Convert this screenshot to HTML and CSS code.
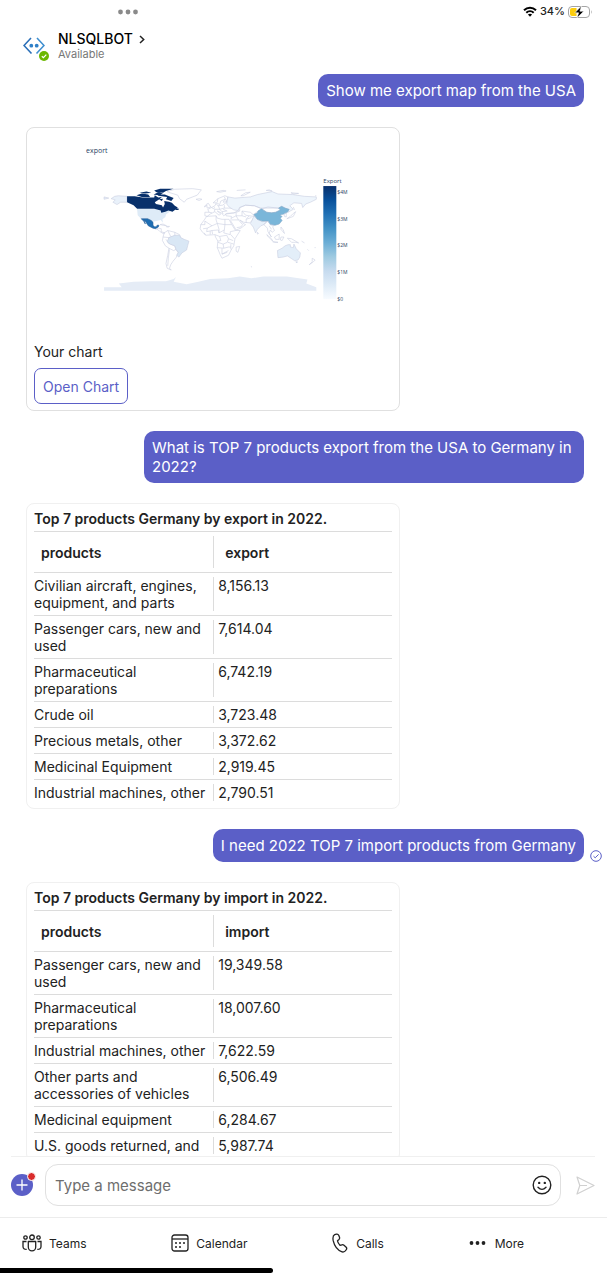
FILE: index.html
```
<!DOCTYPE html>
<html lang="en">
<head>
  <meta charset="UTF-8" />
  <meta name="viewport" content="width=device-width, initial-scale=1.0"/>
  <title>NLSQLBOT</title>
  <link rel="stylesheet" href="styles.css">
</head>
<body>
<div class="app">

  <div class="statusbar">
    <svg class="dots" width="20" height="6" viewBox="0 0 20 6" fill="#8a8a8a"><circle cx="2.5" cy="3" r="2.4"/><circle cx="10" cy="3" r="2.4"/><circle cx="17.5" cy="3" r="2.4"/></svg>
    <div class="power">
      <svg width="14" height="11" viewBox="0 0 14 11" fill="none" stroke="#000" stroke-width="2"><path d="M1 4.2C4.500.8 9.500.8 13 4.200"/><path d="M3.300 6.700C5.400 4.700 8.600 4.700 10.700 6.700"/><path d="M7 10.800L4.900 8.600Q7 7 9.100 8.600Z" fill="#000" stroke="none"/></svg>
      <span>34%</span>
      <svg width="25" height="12" viewBox="0 0 25 12"><rect x=".5" y=".5" width="21" height="11" rx="3.500" fill="#fff" stroke="#a5a5a5"/><path d="M4 2H8.500V10H4Q2 10 2 8V4Q2 2 4 2Z" fill="#fccd0e"/><path d="M23 4Q24.500 6 23 8Z" fill="#a5a5a5"/><path d="M13.500 0L6.800 6.800H10.600L9 12L15.800 5.200H11.900Z" fill="#000" stroke="#fff" stroke-width=".6"/></svg>
    </div>
  </div>

  <header class="header">
    <div class="avatar">
      <svg width="22" height="18" viewBox="0 0 22 18" fill="none" stroke-width="1.600"><path d="M8 1L1 8.500L8.500 16.500" stroke="#2a6fb8"/><path d="M14 1L21 8.500L13.500 16.500" stroke="#3f8fd0"/><circle cx="8.300" cy="8.700" r="1.900" fill="#2f80c8"/><circle cx="13.700" cy="8.700" r="1.900" fill="#2f80c8"/></svg>
      <svg class="presence" width="10" height="10" viewBox="0 0 10 10"><circle cx="5" cy="5" r="5" fill="#6bb700"/><path d="M2.800 5.200L4.400 6.700L7.300 3.600" fill="none" stroke="#fff" stroke-width="1.200"/></svg>
    </div>
    <div>
      <h1 class="name"><a href="#profile">NLSQLBOT <svg width="6" height="9" viewBox="0 0 6 9" fill="none" stroke="#222" stroke-width="1.500"><path d="M1 1L4.700 4.500L1 8"/></svg></a></h1>
      <div class="presence-text">Available</div>
    </div>
  </header>

  <main class="chat">
    <div class="sent">
      <p class="bubble">Show me export map from the USA</p>
      <span class="receipt"></span>
    </div>

    <section class="card chart-card">
      <svg class="chart" viewBox="34 135 358 200" role="img" aria-label="Export map">
        <defs>
          <linearGradient id="blues" x1="0" y1="0" x2="0" y2="1">
            <stop offset="0" stop-color="#08306b"/>
            <stop offset=".125" stop-color="#08519c"/>
            <stop offset=".25" stop-color="#2171b5"/>
            <stop offset=".375" stop-color="#4292c6"/>
            <stop offset=".5" stop-color="#6baed6"/>
            <stop offset=".625" stop-color="#9ecae1"/>
            <stop offset=".75" stop-color="#c6dbef"/>
            <stop offset=".875" stop-color="#deebf7"/>
            <stop offset="1" stop-color="#f7fbff"/>
          </linearGradient>
        </defs>
        <text class="chart-title" x="86" y="153">export</text>

        <!-- world map, points are longitude / latitude -->
        <g class="map" transform="translate(210 237.500) scale(.589 -.589)">
          <path class="ice" d="M-180-90V-84L-150-84L-155-78L-130-75L-100-74L-75-74L-62-70L-58-67L-62-75L-40-79L-20-75L0-70L30-69L50-66L70-69L90-66L130-66L165-71L163-78L180-84V-90Z"/>
          <!-- North America -->
          <path class="low" d="M-168 66L-162 70L-156 71L-141 70V60L-152 60L-158 56L-165 60L-161 64ZM-180 65L-172 67L-180 69Z"/>
          <path class="usa" d="M-124 49H-95L-83 45L-79 43L-70 47L-67 45L-75 39L-76 35L-81 31L-80 25L-84 30L-97 27L-106 32L-117 32L-123 38Z"/>
          <path class="canada" d="M-141 60V70L-128 70L-115 68L-108 68L-95 68L-94 72L-88 68L-82 69L-85 66L-94 60L-92 57L-82 55L-80 51L-77 57L-78 62L-70 61L-65 59L-60 54L-55 51L-60 47L-64 44L-68 45L-71 46L-76 44L-83 42L-84 46L-95 49H-124L-130 55Z"/>
          <path class="canada" d="M-125 72L-116 75L-105 73L-102 69L-116 69ZM-120 76L-108 78L-100 76L-110 75ZM-96 73L-88 77L-80 75L-88 72ZM-95 80L-85 83L-62 83L-75 79L-80 76L-91 77ZM-90 73L-77 73L-62 67L-66 62L-75 65L-73 69L-88 71ZM-87 65L-80 66L-82 62ZM-59 50L-53 49L-54 47L-59 47Z"/>
          <path class="land" d="M-73 78L-60 82L-30 83L-15 81L-22 72L-40 65L-44 60L-52 66L-55 72L-68 76Z"/>
          <path class="mexico" d="M-117 32L-106 32L-100 29L-97 26L-97 21L-94 18L-91 19L-90 21L-87 21L-88 18L-92 15L-97 16L-105 20L-109 26L-112 30L-110 23L-113 28Z"/>
          <path class="land" d="M-92 15L-88 16L-83 15L-83 10L-77 8L-80 7L-85 10L-88 13ZM-85 22L-80 23L-74 20L-80 21ZM-74 19L-69 19L-70 18L-74 18ZM-24 65L-18 66L-14 65L-19 63Z"/>
          <!-- South America -->
          <path class="land" d="M-78 8L-72 12L-60 9L-52 5L-50 0L-60 3L-70 0L-70-10L-60-14L-58-20L-54-26L-58-34L-63-40L-67-46L-69-52L-66-55L-73-52L-75-44L-72-30L-70-18L-76-14L-81-5L-80 1Z"/>
          <path class="land" d="M-80 1L-70 0M-75-3L-70-10M-70-18L-62-22L-58-20M-69-20L-71-35L-72-48M-72 12L-67 2M-60 9V3"/>
          <path class="brazil" d="M-70 0L-60 4L-52 4L-50 0L-44-3L-36-6L-38-13L-40-21L-48-26L-53-33L-57-30L-54-25L-58-20L-60-14L-68-11L-73-7Z"/>
          <!-- Africa -->
          <path class="land" d="M-6 36L10 37L12 33L20 31L32 31L36 23L43 12L51 12L42-2L40-14L35-22L31-30L20-35L17-29L12-17L13-6L9 1L8 5L-7 4L-13 9L-17 15L-16 22L-10 30ZM44-16L50-15L47-25L44-23Z"/>
          <path class="land" d="M-9 28L3 20L12 24L25 22H36M25 31V22L24 13L15 8V14L12 24M3 20L-5 16L-12 15M-5 16L-6 10L3 12L4 6M3 12L14 13L15 8M8 5L16 2L18-5L13-6M24 13L23 8L34 5V10L43 12M16 2L28 4L31-2L29-8L22-11L13-8M35 5L41-2M31-2L39-5M30-8L40-11M22-11L23-18L12-17M23-18L31-16L35-16M20-18V-28L31-22M20-28L29-25M35-11L35-20M-10 8L-8 4M0 11V5M-9 28V22H-16M10 37V30L12 24"/>
          <!-- Europe -->
          <path class="land" d="M-9 37V43L-2 43L-4 48L2 51L8 54L10 58L13 54L21 55L28 60L40 60L48 46L40 42L28 41L23 37L19 42L12 45L18 40L15 38L8 44L0 40L-5 36Z"/>
          <path class="land" d="M5 59L13 66L25 71L30 69L28 61L22 60L25 65L18 62L16 56L11 59ZM-5 50L1 52L-3 58L-6 57ZM-10 52L-6 54L-8 55ZM11 78L22 80L27 79L17 77Z"/>
          <path class="land" d="M-2 43L3 42M2 51L8 48L7 44M8 48L16 48L14 54M16 48L24 50L24 55M24 50L40 50M16 48L20 44L28 45M20 44L22 40M13 66L12 60M24 69L28 61M6 52L8 50M22 48L29 45"/>
          <path class="russia" d="M30 69L42 67L68 69L80 73L105 78L115 74L140 73L160 70L180 69V65L170 60L162 57L157 51L155 58L142 59L135 54L141 48L132 43L131 48L122 53L115 50L98 50L85 50L75 54L60 55L50 51L47 46L40 47L32 52L28 57Z"/>
          <path class="land" d="M52 71L60 76L68 77L56 71ZM95 80L105 79L100 81ZM137 76L150 75L142 74ZM178 71L180 71M45 80L60 81"/>
          <!-- Asia -->
          <path class="land" d="M26 40L42 42L50 45L50 51L60 55L75 54L85 50L87 48L80 44L73 39L75 36L70 28L67 25L57 26L50 30L56 24L60 22L52 16L44 13L35 28L36 36L27 37Z"/>
          <path class="land" d="M44 42V37L36 33M44 37L48 30L37 30M48 30L55 22L52 18M44 37L54 37L54 45L60 38L66 37L61 31L61 25M54 37L61 35M54 45L68 43L73 39M66 37L74 36M45 17L52 18M61 31L70 34"/>
          <path class="low" d="M74 37L80 31L88 27L96 28L91 22L86 20L80 14L77 8L73 18L68 24L71 29Z"/>
          <path class="land" d="M88 49L98 52L115 50L120 47L111 43L104 42L96 43Z"/>
          <path class="china" d="M74 39L80 42L81 45L87 49L91 46L96 43L104 42L111 43L119 47L116 50L121 53L127 50L134 48L131 43L125 40L121 39L118 38L122 36L119 33L122 29L117 23L110 21L102 22L98 28L88 28L80 31Z"/>
          <path class="land" d="M91 22L98 28L102 22L108 21L106 18L109 12L105 9L102 13L100 7L104 1L98 10L97 16ZM125 40L129 42L129 35L126 36ZM130 32L136 36L141 41L145 44L141 36L136 34ZM120 18L124 13L126 7L120 14ZM96 5L104-2L106-6L98 2ZM109 1L117 6L117-3L111-3ZM106-7L115-8L110-8ZM120 1L125 1L122-5L119-4ZM131-1L138-2L150-9L145-8L138-8ZM80 9L82 7L80 6ZM100 20L104 14M141 52L143 47"/>
          <!-- Oceania -->
          <path class="australia" d="M114-22L122-18L127-14L132-12L136-12L136-16L141-17L142-11L146-19L153-26L152-33L149-38L143-39L137-35L131-31L124-33L115-34ZM145-41L148-41L147-43Z"/>
          <path class="land" d="M173-35L178-38L174-42L168-46L173-41ZM165-20L167-22M177-17L179-17M155-6L160-9M69-49L71-50"/>
        </g>

        <text class="legend-title" x="323" y="183">Export</text>
        <rect x="323" y="186" width="13" height="113" fill="url(#blues)"/>
        <g class="ticks">
          <text x="337" y="194">$4M</text>
          <text x="337" y="221">$3M</text>
          <text x="337" y="247">$2M</text>
          <text x="337" y="274">$1M</text>
          <text x="337" y="301">$0</text>
        </g>
      </svg>
      <p class="caption">Your chart</p>
      <button class="open-chart" type="button">Open Chart</button>
    </section>

    <div class="sent">
      <p class="bubble">What is TOP 7 products export from the USA to Germany in 2022?</p>
      <span class="receipt"></span>
    </div>

    <section class="card">
      <table>
        <caption>Top 7 products Germany by export in 2022.</caption>
        <thead>
          <tr><th>products</th><th>export</th></tr>
        </thead>
        <tbody>
          <tr><td>Civilian aircraft, engines, equipment, and parts</td><td>8,156.13</td></tr>
          <tr><td>Passenger cars, new and used</td><td>7,614.04</td></tr>
          <tr><td>Pharmaceutical preparations</td><td>6,742.19</td></tr>
          <tr><td>Crude oil</td><td>3,723.48</td></tr>
          <tr><td>Precious metals, other</td><td>3,372.62</td></tr>
          <tr><td>Medicinal Equipment</td><td>2,919.45</td></tr>
          <tr><td>Industrial machines, other</td><td>2,790.51</td></tr>
        </tbody>
      </table>
    </section>

    <div class="sent">
      <p class="bubble">I need 2022 TOP 7 import products from Germany</p>
      <span class="receipt"><svg width="12" height="12" viewBox="0 0 12 12" fill="none" stroke="#5b5fc7"><circle cx="6" cy="6" r="5.300"/><path d="M3.500 6.200L5.200 7.800L8.600 4.400"/></svg></span>
    </div>

    <section class="card">
      <table>
        <caption>Top 7 products Germany by import in 2022.</caption>
        <thead>
          <tr><th>products</th><th>import</th></tr>
        </thead>
        <tbody>
          <tr><td>Passenger cars, new and used</td><td>19,349.58</td></tr>
          <tr><td>Pharmaceutical preparations</td><td>18,007.60</td></tr>
          <tr><td>Industrial machines, other</td><td>7,622.59</td></tr>
          <tr><td>Other parts and accessories of vehicles</td><td>6,506.49</td></tr>
          <tr><td>Medicinal equipment</td><td>6,284.67</td></tr>
          <tr><td>U.S. goods returned, and</td><td>5,987.74</td></tr>
        </tbody>
      </table>
    </section>
  </main>

  <form class="composer">
    <button class="add" type="button" aria-label="Add">
      <svg width="22" height="22" viewBox="0 0 22 22"><circle cx="11" cy="11" r="11" fill="#5b5fc7"/><path d="M11 5.500V16.500M5.500 11H16.500" stroke="#fff" stroke-width="1.300"/></svg>
      <span class="badge"></span>
    </button>
    <div class="field">
      <input type="text" placeholder="Type a message" aria-label="Type a message">
      <button type="button" aria-label="Emoji">
        <svg width="20" height="20" viewBox="0 0 20 20" fill="none" stroke="#222" stroke-width="1.400"><circle cx="10" cy="10" r="8.800"/><path d="M6 12.200Q10 16.600 14 12.200" stroke-linecap="round"/><circle cx="7.200" cy="7.900" r="1.200" fill="#222" stroke="none"/><circle cx="12.800" cy="7.900" r="1.200" fill="#222" stroke="none"/></svg>
      </button>
    </div>
    <button class="send" type="submit" aria-label="Send">
      <svg width="19" height="19" viewBox="0 0 19 19" fill="none" stroke="#d0d0d0" stroke-width="1.200" stroke-linejoin="round"><path d="M1 1L18 9.500L1 18L3.800 9.500ZM3.800 9.500H11"/></svg>
    </button>
  </form>

  <nav class="tabs">
    <a href="#teams">
      <svg width="20" height="18" viewBox="0 0 20 18" fill="none" stroke="#222" stroke-width="1.300"><circle cx="10" cy="3.300" r="2.300"/><circle cx="3.500" cy="3.500" r="1.700"/><circle cx="16.500" cy="3.500" r="1.700"/><path d="M6.300 7.500H13.700V13A3.700 3.900 0 0 1 6.300 13Z" stroke-linejoin="round"/><path d="M4.500 7.500H1V12.500Q1 15.500 4.700 15.400M15.500 7.500H19V12.500Q19 15.500 15.300 15.400"/></svg>
      Teams
    </a>
    <a href="#calendar">
      <svg width="18" height="18" viewBox="0 0 18 18" fill="none" stroke="#222" stroke-width="1.300"><rect x="1" y="1" width="16" height="16" rx="2.500"/><path d="M1 5H17"/><g fill="#222" stroke="none"><circle cx="9" cy="9" r="1"/><circle cx="13" cy="9" r="1"/><circle cx="5" cy="9" r="1"/><circle cx="5" cy="13" r="1"/><circle cx="9" cy="13" r="1"/></g></svg>
      Calendar
    </a>
    <a href="#calls">
      <svg width="17" height="20" viewBox="0 0 17 20" fill="none" stroke="#222" stroke-width="1.300" stroke-linejoin="round"><path d="M2.700 1.700L4.500 1.100Q6 .8 6.700 2.200L7.500 4.300Q7.900 5.500 7 6.400L5.500 7.800Q6 10.200 8 12.300L10 11.800Q11.100 11.500 12 12.300L14.200 14.300Q15.200 15.400 14.300 16.600L13 18.100Q11.800 19.300 10.100 18.900Q3.200 16.600 1.200 7.700Q.3 2.800 2.700 1.700Z"/></svg>
      Calls
    </a>
    <a href="#more">
      <svg width="17" height="6" viewBox="0 0 17 6" fill="#222"><circle cx="2.500" cy="3" r="1.900"/><circle cx="8.500" cy="3" r="1.900"/><circle cx="14.500" cy="3" r="1.900"/></svg>
      More
    </a>
  </nav>
  <div class="home-bar"></div>

</div>
</body>
</html>
```
FILE: styles.css
```
* {
  box-sizing: border-box;
}

body {
  margin: 0;
  font-family: Inter, sans-serif;
  font-size: 14px;
  line-height: 17px;
  color: #222;
  background: #fff;
}

h1, p {
  margin: 0;
}

a {
  color: inherit;
  text-decoration: none;
}

button {
  padding: 0;
  border: 0;
  background: none;
  font: inherit;
}

svg {
  display: block;
}

.app {
  display: flex;
  flex-direction: column;
  height: 100vh;
  overflow: hidden;
}

/* top */
.statusbar {
  display: grid;
  grid-template-columns: 1fr auto;
  align-items: center;
  height: 23px;
  padding: 0 14px 0 118px;
}

.power {
  display: flex;
  align-items: center;
  gap: 3px;
  font-size: 11px;
  font-weight: 500;
}

.header {
  display: flex;
  align-items: center;
  gap: 9px;
  height: 51px;
  padding: 0 23px 5px;
}

.avatar {
  position: relative;
  width: 26px;
}

.presence {
  position: absolute;
  right: 0;
  bottom: -6px;
}

.name {
  font-size: 14px;
  font-weight: 500;
  line-height: 16px;
  color: #000;
}

.name a {
  display: flex;
  align-items: center;
  gap: 6px;
}

.presence-text {
  font-size: 11px;
  line-height: 14px;
  color: #777;
}

/* messages */
.chat {
  flex: 1;
  min-height: 0;
  overflow: hidden;
  display: flex;
  flex-direction: column;
  gap: 20px;
  padding: 0 5px 0 26px;
}

.sent {
  display: flex;
  flex-shrink: 0;
  justify-content: flex-end;
  align-items: flex-end;
  gap: 6px;
}

.bubble {
  max-width: 440px;
  padding: 7px 8px;
  border-radius: 10px;
  background: #5b5fc7;
  color: #fff;
  font-size: 15px;
  line-height: 19px;
}

.receipt {
  width: 12px;
}

.card {
  flex-shrink: 0;
  width: 65%;
  padding: 6px 7px 3px;
  border: 1px solid #f0f0f0;
  border-radius: 8px;
}

.chart-card {
  padding: 7px 7px 6px;
  border-color: #e0e0e0;
}

.chart {
  width: 100%;
  height: auto;
}

.chart text {
  font-family: "Open Sans", sans-serif;
  fill: #2a3f5f;
}

.chart-title {
  font-size: 7px;
}

.legend-title {
  font-size: 6px;
}

.ticks {
  font-size: 5px;
}

.map path {
  stroke: #c9cde0;
  stroke-width: 1;
}

.map .land {
  fill: none;
}

.map .ice {
  fill: #e5ecf6;
  stroke: none;
}

.map .low {
  fill: #e9f1fa;
}

.map .usa {
  fill: #deebf7;
  stroke: none;
}

.map .canada {
  fill: #08306b;
  stroke: none;
}

.map .mexico {
  fill: #1f6eb3;
  stroke: #2a5f98;
}

.map .brazil {
  fill: #d9e7f5;
}

.map .russia {
  fill: #eef5fc;
}

.map .china {
  fill: #7ab6d9;
  stroke: #86a9c8;
}

.map .australia {
  fill: #e3eef9;
}

.caption {
  margin: 8px 0;
}

.open-chart {
  height: 36px;
  padding: 0 8px;
  border: 1px solid #5b5fc7;
  border-radius: 7px;
  color: #5b5fc7;
}

/* tables */
table {
  width: 100%;
  table-layout: fixed;
  border-collapse: separate;
  border-spacing: 0;
}

caption {
  padding-bottom: 4px;
  font-weight: 600;
  text-align: left;
}

th, td {
  padding: 4px 5px 4px 0;
  border-top: 1px solid #dcdcdc;
  text-align: left;
  vertical-align: top;
}

th {
  height: 41px;
  padding-left: 7px;
  font-weight: 600;
  vertical-align: middle;
}

th + th, td + td {
  padding-left: 5px;
  background: linear-gradient(#dcdcdc, #dcdcdc) left center / 1px calc(100% - 8px) no-repeat;
}

th + th {
  padding-left: 12px;
}

/* bottom */
.composer {
  display: flex;
  align-items: center;
  gap: 12px;
  height: 61px;
  margin: 0 12px 0 11px;
  padding-bottom: 4px;
  border-top: 1px solid #f0f0f0;
}

.add {
  position: relative;
}

.badge {
  position: absolute;
  top: -2px;
  right: -3px;
  width: 9px;
  height: 9px;
  border: 1px solid #fff;
  border-radius: 50%;
  background: #d92c2c;
}

.send {
  padding-left: 3px;
}

.field {
  flex: 1;
  display: flex;
  align-items: center;
  height: 42px;
  padding: 0 8px 0 9px;
  border: 1px solid #e0e0e0;
  border-radius: 13px;
}

.field input {
  flex: 1;
  min-width: 0;
  padding: 0;
  border: 0;
  outline: 0;
  background: none;
  font: inherit;
  font-size: 15px;
}

.field input::placeholder {
  color: #6e6e6e;
}

.tabs {
  display: flex;
  justify-content: space-between;
  align-items: center;
  height: 51px;
  padding: 0 83px 0 22px;
  border-top: 1px solid #ececec;
  font-size: 12px;
}

.tabs a {
  display: flex;
  align-items: center;
  gap: 7px;
}

.tabs a:last-child {
  gap: 9px;
}

.home-bar {
  width: 45%;
  height: 5px;
  margin-bottom: 7px;
  border-radius: 0 3px 3px 0;
  background: #000;
}
```
